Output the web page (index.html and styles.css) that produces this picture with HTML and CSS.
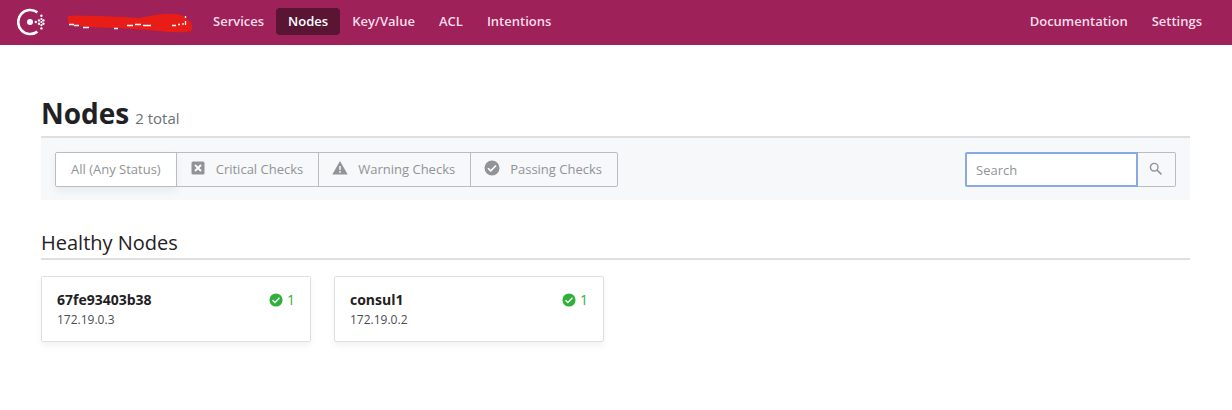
FILE: index.html
```
<!DOCTYPE html>
<html lang="en">
<head>
    <meta charset="UTF-8">
    <meta name="viewport" content="width=device-width, initial-scale=1.0">
    <title>Nodes - Consul</title>
    <link rel="stylesheet" href="styles.css">
</head>
<body>
    <!-- shared icons -->
    <svg class="sprite" aria-hidden="true">
        <symbol id="icon-check" viewBox="0 0 16 16">
            <circle cx="8" cy="8" r="7.5" fill="currentColor"/>
            <path d="M4 8.2l2.7 2.7L12 5.5" fill="none" stroke="#fff" stroke-width="1.6"/>
        </symbol>
        <symbol id="icon-cross" viewBox="0 0 16 16">
            <rect x="1.5" y="1.5" width="13" height="13" rx="1.5" fill="currentColor"/>
            <path d="M5 5l6 6M11 5l-6 6" stroke="#fff" stroke-width="1.9"/>
        </symbol>
        <symbol id="icon-warning" viewBox="0 0 16 16">
            <path d="M8 1L15.7 14.5H.3z" fill="currentColor"/>
            <path d="M8 6v4M8 11v1.8" stroke="#fff" stroke-width="1.4"/>
        </symbol>
        <symbol id="icon-search" viewBox="0 0 16 16">
            <circle cx="6.2" cy="6.2" r="3.8" fill="none" stroke="currentColor" stroke-width="1.4"/>
            <path d="M9 9l4.4 4.4" stroke="currentColor" stroke-width="1.6"/>
        </symbol>
    </svg>

    <header class="topbar">
        <a class="logo" href="#" aria-label="Consul">
            <svg width="28" height="28" viewBox="0 0 28 28">
                <path d="M20.4 4.4A12 12 0 1 0 20.4 23.6" fill="none" stroke="#fff" stroke-width="2.6"/>
                <g fill="#fff">
                    <circle cx="13" cy="14" r="3"/>
                    <circle cx="18.8" cy="14" r="1.2"/>
                    <circle cx="22" cy="12.4" r="1.2"/>
                    <circle cx="22" cy="15.8" r="1.2"/>
                    <circle cx="26.4" cy="12.4" r="1.2"/>
                    <circle cx="26.4" cy="15.8" r="1.2"/>
                    <circle cx="24.4" cy="7.8" r="1.2"/>
                    <circle cx="24.4" cy="11" r="1.1"/>
                    <circle cx="24.4" cy="14" r="1.1"/>
                    <circle cx="24.4" cy="17.2" r="1.1"/>
                    <circle cx="24.4" cy="20.4" r="1.2"/>
                </g>
            </svg>
        </a>
        <a class="datacenter" href="#" aria-label="Datacenter">
            <svg width="126" height="20" viewBox="0 0 126 20">
                <path d="M1 4Q4 3 30 4Q58 5 72 6Q86 3 96 2Q114 1 119 6Q128 12 124 19Q116 22 82 18Q68 17 52 16Q30 16 6 14Q0 13 1 4Z" fill="#e91d17"/>
                <path d="M2 12.5H7M7 13.5H12M16 15.5H22M47 16.5H51M60 13.500H66M68 12.5H74M76 13.5H84M105 13.5H109M111 12.5H113M116 13V11M118.5 4V6M118.5 9V13" fill="none" stroke="#fff" stroke-width="1.3"/>
            </svg>
        </a>
        <nav class="nav">
            <a href="#">Services</a>
            <a class="active" href="#">Nodes</a>
            <a href="#">Key/Value</a>
            <a href="#">ACL</a>
            <a href="#">Intentions</a>
        </nav>
        <nav class="nav nav-right">
            <a href="#">Documentation</a>
            <a href="#">Settings</a>
        </nav>
    </header>

    <main class="content">
        <div class="title">
            <h1>Nodes</h1>
            <span class="total">2 total</span>
        </div>

        <form class="toolbar">
            <div class="filters">
                <button type="button" class="filter selected">All (Any Status)</button>
                <button type="button" class="filter"><svg class="icon"><use href="#icon-cross"/></svg>Critical Checks</button>
                <button type="button" class="filter"><svg class="icon"><use href="#icon-warning"/></svg>Warning Checks</button>
                <button type="button" class="filter"><svg class="icon"><use href="#icon-check"/></svg>Passing Checks</button>
            </div>
            <div class="search">
                <input type="text" placeholder="Search" aria-label="Search">
                <button type="button" aria-label="Run search"><svg class="icon"><use href="#icon-search"/></svg></button>
            </div>
        </form>

        <h2>Healthy Nodes</h2>
        <div class="cards">
            <a class="card" href="#">
                <span class="card-head">
                    <strong>67fe93403b38</strong>
                    <span class="passing"><svg class="icon"><use href="#icon-check"/></svg>1</span>
                </span>
                <span class="address">172.19.0.3</span>
            </a>
            <a class="card" href="#">
                <span class="card-head">
                    <strong>consul1</strong>
                    <span class="passing"><svg class="icon"><use href="#icon-check"/></svg>1</span>
                </span>
                <span class="address">172.19.0.2</span>
            </a>
        </div>
    </main>
</body>
</html>
```
FILE: styles.css
```
* {
    box-sizing: border-box;
}

body {
    margin: 0;
    background-color: #fff;
    color: #1f2124;
    font-family: "Open Sans", "Noto Sans", sans-serif;
    font-size: 13px;
}

a {
    color: inherit;
    text-decoration: none;
}

.sprite {
    display: none;
}

.icon {
    display: block;
    width: 16px;
    height: 16px;
}

/* top bar */
.topbar {
    display: flex;
    align-items: center;
    height: 45px;
    padding: 0 18px 2px 17px;
    background-color: #9e2159;
}

.logo,
.datacenter {
    display: flex;
}

.datacenter {
    margin: 0 8px 0 22px;
}

.datacenter svg {
    overflow: visible;
}

.nav {
    display: flex;
}

.nav a {
    padding: 0 12px;
    border-radius: 4px;
    color: #fbdcea;
    font-weight: 600;
    line-height: 27px;
}

.nav .active {
    background-color: #5a1434;
    color: #fff;
}

.nav-right {
    margin-left: auto;
}

/* page */
.content {
    padding: 47px 42px 40px 41px;
}

.title {
    display: flex;
    align-items: baseline;
    gap: 6px;
    padding-bottom: 1px;
    border-bottom: 2px solid #dce0e2;
}

h1 {
    margin: 0;
    font-size: 28px;
    font-weight: 700;
    line-height: 43px;
}

.total {
    color: #6a7077;
    font-size: 15px;
}

.toolbar {
    display: flex;
    justify-content: space-between;
    padding: 14px 14px 13px;
    background-color: #f6f8fa;
}

.filters,
.search {
    display: flex;
}

.filter {
    display: flex;
    align-items: center;
    height: 35px;
    margin-right: -1px;
    padding: 0 15px 1px;
    border: 1px solid #b8bdc3;
    background-color: transparent;
    color: #919397;
    font: inherit;
    cursor: pointer;
}

.filter:first-child {
    border-radius: 2px 0 0 2px;
}

.filter:last-child {
    margin-right: 0;
    border-radius: 0 2px 2px 0;
}

.filter .icon {
    margin: 0 10px 3px -2px;
}

.filter.selected {
    background-color: #fff;
    box-shadow: 0 4px 8px rgba(0, 0, 0, 0.06);
}

.search input {
    width: 173px;
    height: 35px;
    padding: 0 9px;
    border: 2px solid #86abe2;
    border-radius: 2px 0 0 2px;
    outline: none;
    background-color: #fff;
    font: inherit;
}

.search input::placeholder {
    color: #919397;
}

.search button {
    display: flex;
    align-items: center;
    justify-content: center;
    width: 38px;
    height: 35px;
    padding: 0 2px 2px 0;
    border: 1px solid #b8bdc3;
    border-left: none;
    border-radius: 0 2px 2px 0;
    background-color: transparent;
    color: #919397;
    cursor: pointer;
}

h2 {
    margin: 27px 0 16px;
    border-bottom: 2px solid #dce0e2;
    font-size: 20px;
    font-weight: 500;
    line-height: 31px;
}

/* node cards */
.cards {
    display: grid;
    grid-template-columns: repeat(4, 1fr);
    gap: 23px;
}

.card {
    display: block;
    padding: 13px 15px 11px;
    border: 1px solid #dce0e2;
    border-radius: 2px;
    box-shadow: 0 4px 6px rgba(0, 0, 0, 0.05);
}

.card-head {
    display: flex;
    justify-content: space-between;
    font-size: 14px;
    line-height: 20px;
}

.passing {
    display: flex;
    align-items: center;
    gap: 4px;
    color: #2eb039;
}

.passing .icon {
    width: 14px;
    height: 14px;
}

.address {
    display: block;
    color: #4a4e53;
    font-size: 12px;
    line-height: 20px;
}
```
